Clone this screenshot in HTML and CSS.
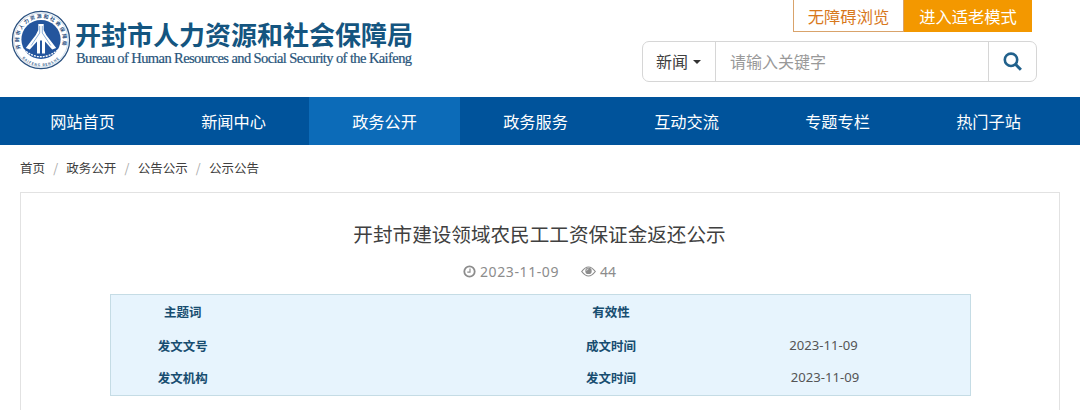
FILE: index.html
```
<!DOCTYPE html>
<html lang="zh-CN">
<head>
<meta charset="utf-8">
<title>开封市人力资源和社会保障局</title>
<link rel="stylesheet" href="styles.css">
</head>
<body>
<header class="header">
  <a class="brand">
    <svg class="emblem" viewBox="0 0 60 60">
      <defs>
        <path id="ring-top" d="M9.9 38.6A21.9 21.9 0 1 1 50.1 38.6"/>
        <path id="ring-bottom" d="M11 48.2A26.3 26.3 0 0 0 49 48.2"/>
      </defs>
      <circle cx="30" cy="30" r="28.6" fill="#fff" stroke="#2c5280" stroke-width="1.3"/>
      <circle cx="30" cy="30" r="27" fill="none" stroke="#9db9d4" stroke-width=".5"/>
      <circle cx="30" cy="29.5" r="19.6" fill="#24559d"/>
      <path d="M12.5 39.5Q30 54 47.5 39.5" fill="none" stroke="#fff" stroke-width="1.4" stroke-dasharray="2 1"/>
      <path d="M27.300 14h5.400v6l2.500 5 10 13-4 1.500-7.200-8v12h-3v-13h-2v13h-3v-12l-7.200 8-4-1.500 10-13 2.500-5z" fill="#fff"/>
      <path d="M28.700 16v7l-8.500 12.500M31.300 16v7l8.500 12.500" fill="none" stroke="#6f9bce" stroke-width=".8"/>
      <text class="ring-zh"><textPath href="#ring-top" textLength="83">开封市人力资源和社会保障局</textPath></text>
      <text class="ring-en"><textPath href="#ring-bottom" textLength="41">KAIFENG RENSHE</textPath></text>
    </svg>
    <span class="brand-text">
      <span class="brand-zh">开封市人力资源和社会保障局</span>
      <span class="brand-en">Bureau of Human Resources and Social Security of the Kaifeng</span>
    </span>
  </a>
  <div class="tools">
    <div class="modes"><a class="mode">无障碍浏览</a><a class="mode mode-on">进入适老模式</a></div>
    <div class="search">
      <span class="search-type">新闻<i class="caret"></i></span>
      <span class="search-input">请输入关键字</span>
      <span class="search-btn"><svg width="20" height="20" viewBox="0 0 20 20" fill="none" stroke="#21618c"><circle cx="8" cy="7.800" r="6.200" stroke-width="2.600"/><path d="M12.500 12.300l5.400 5.400" stroke-width="3"/></svg></span>
    </div>
  </div>
</header>
<nav class="nav">
  <a class="nav-item">网站首页</a><a class="nav-item">新闻中心</a><a class="nav-item active">政务公开</a><a class="nav-item">政务服务</a><a class="nav-item">互动交流</a><a class="nav-item">专题专栏</a><a class="nav-item">热门子站</a>
</nav>
<div class="crumbs"><a>首页</a><i>/</i><a>政务公开</a><i>/</i><a>公告公示</a><i>/</i><a>公示公告</a></div>
<main class="article">
  <h1 class="title">开封市建设领域农民工工资保证金返还公示</h1>
  <div class="meta">
    <svg class="clock" width="13" height="13" viewBox="0 0 13 13" fill="none" stroke="#8c8c8c"><circle cx="6.500" cy="6.500" r="5.200" stroke-width="1.800"/><path d="M7 3.500v3.700H4.300" stroke-width="1.200"/></svg>
    <span class="date">2023-11-09</span>
    <svg class="eye" width="15" height="11" viewBox="0 0 15 11"><path d="M.7 5.500Q7.500-3.500 14.300 5.500Q7.500 14.500 .7 5.500z" fill="none" stroke="#8c8c8c" stroke-width="1.200"/><circle cx="7.500" cy="4.900" r="3.200" fill="#8c8c8c"/><path d="M5.700 4.700a1.800 1.800 0 0 1 1.800-1.800" fill="none" stroke="#fff" stroke-width=".7"/></svg>
    <span class="views">44</span>
  </div>
  <div class="info">
    <b>主题词</b><span></span><b>有效性</b><span></span>
    <b>发文文号</b><span></span><b>成文时间</b><span>2023-11-09</span>
    <b>发文机构</b><span></span><b>发文时间</b><span class="published">2023-11-09</span>
  </div>
</main>
</body>
</html>
```
FILE: styles.css
```
* { box-sizing: border-box; }
body {
  margin: 0;
  height: 410px;
  overflow: hidden;
  background: #fff;
  color: #404040;
  font-family: "Noto Sans CJK SC", "Noto Sans", sans-serif;
}
i { font-style: normal; }
.header {
  display: flex;
  justify-content: space-between;
  height: 97px;
  padding: 0 43px 0 11px;
}
.brand { display: flex; padding-top: 10px; }
.emblem { width: 60px; height: 60px; }
.ring-zh { font-size: 5px; font-weight: 700; fill: #1f4d7e; }
.ring-en { font-size: 3.600px; font-weight: 700; fill: #4c7098; }
.brand-text { display: flex; flex-direction: column; padding: 10px 0 0 4px; white-space: nowrap; }
.brand-zh { height: 29px; font-size: 26px; line-height: 27px; font-weight: 700; color: #145580; }
.brand-en {
  height: 18px;
  padding-left: 1px;
  font: 14.500px/18px "Liberation Serif", serif;
  letter-spacing: -.59px;
  color: #27547a;
  -webkit-text-stroke: .2px #27547a;
}
.tools { width: 395px; }
.modes { display: flex; justify-content: flex-end; height: 32px; padding-right: 5px; }
.mode {
  width: 111px;
  border: 1px solid #d9a36b;
  border-top: 0;
  font-size: 16.300px;
  line-height: 32px;
  text-align: center;
  color: #d8781c;
}
.mode-on { width: 128px; border: 0; background: #f39800; color: #fff; }
.search {
  display: flex;
  height: 41px;
  margin-top: 9px;
  border: 1px solid #d6d6d6;
  border-radius: 7px;
  font-size: 16px;
  line-height: 39px;
}
.search-type { display: flex; align-items: center; width: 73px; padding-left: 13px; border-right: 1px solid #d6d6d6; }
.caret { margin-left: 5px; border: 4px solid transparent; border-top-color: #333; border-bottom: 0; }
.search-input { flex: 1; padding-left: 14px; color: #999; }
.search-btn { display: flex; align-items: center; width: 48px; padding-left: 14px; border-left: 1px solid #d6d6d6; }
.nav { display: flex; height: 48px; padding-left: 7px; background: #00539b; }
.nav-item { width: 151px; font-size: 16.200px; line-height: 48px; text-align: center; color: #fff; }
.active { background: #0c6bb8; }
.crumbs { display: flex; height: 47px; padding-left: 20px; font-size: 12.500px; line-height: 46px; }
.crumbs i { width: 21.300px; text-align: center; color: #aaa; }
.article { width: 1040px; height: 230px; margin-left: 20px; border: 1px solid #e2e2e2; }
.title { height: 30px; margin: 26px 0 0; font-size: 19.600px; line-height: 30px; font-weight: 400; text-align: center; padding-right: 1px; }
.meta {
  display: flex;
  align-items: center;
  height: 24px;
  margin: 10px 0 0 442px;
  font-size: 14px;
  font-family: "Noto Sans", sans-serif;
  color: #8c8c8c;
}
.date { width: 101px; margin-left: 4px; letter-spacing: .6px; }
.views { margin-left: 4px; }
.info {
  display: grid;
  grid-template-columns: 143.500px 285.500px 142px 283px;
  grid-template-rows: 34px 32px 33px;
  width: 861px;
  height: 102px;
  margin: 11px 0 0 89px;
  border: 1px solid #c5dce5;
  background: #e7f4fd;
  font-size: 12.500px;
  text-align: center;
  line-height: 34px;
}
.info b { color: #174d70; }
.info span { font-family: "Noto Sans", sans-serif; font-size: 13.100px; line-height: 33px; color: #555; }
.info .published { padding-left: 3px; }
```
